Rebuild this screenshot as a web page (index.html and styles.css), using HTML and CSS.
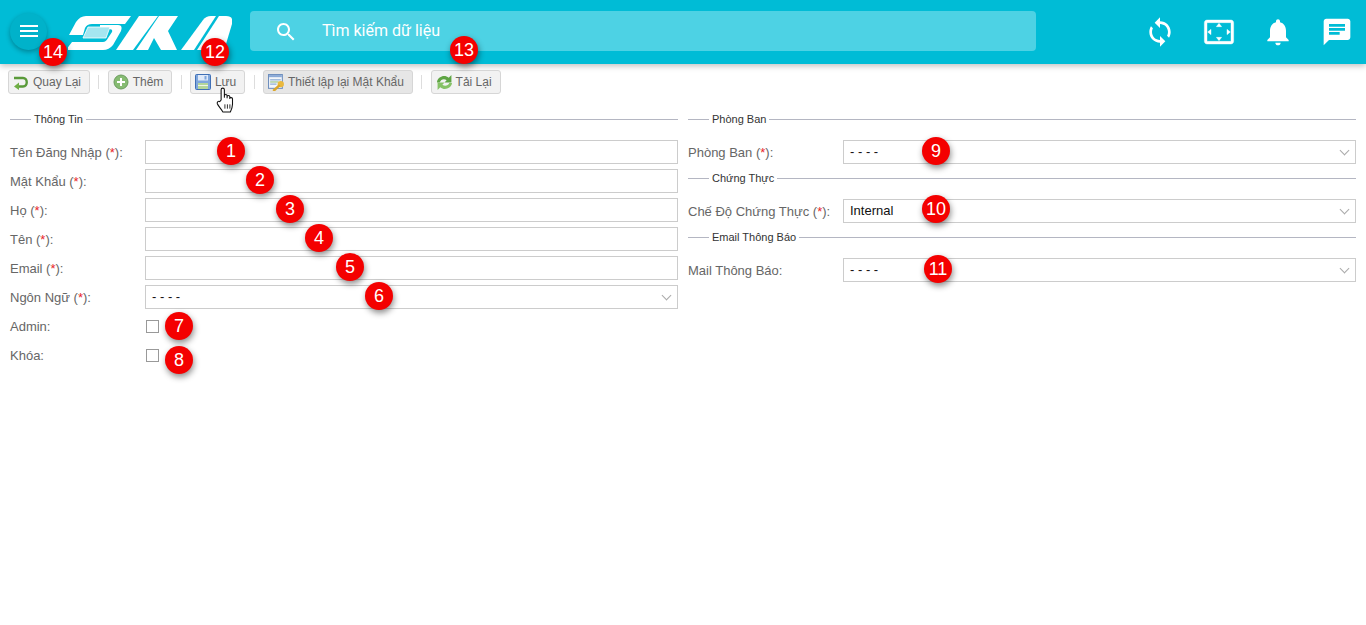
FILE: index.html
```html
<!DOCTYPE html>
<html lang="vi">
<head>
<meta charset="UTF-8" />
<meta name="viewport" content="width=device-width, initial-scale=1.0">
<title>Thêm người dùng</title>
<link rel="stylesheet" href="styles.css">
</head>
<body>

<header class="topbar">
  <button class="menu-btn" aria-label="Menu">
    <svg viewBox="0 0 24 24" width="24" height="24"><path fill="#fff" d="M3 18h18v-2H3v2zm0-5h18v-2H3v2zm0-7v2h18V6H3z"/></svg>
  </button>
  <svg class="logo" viewBox="68 15 164 35" width="164" height="35" aria-label="Logo">
    <g fill="#fff">
      <path d="M86 16H131L125 24H92Q87 24 85 28L83 35H69L76 22Q80 16 86 16Z"/>
      <path d="M109 25H118Q123 25 121 31L113 45Q109 50 103 50H66L72 42H103Q106 42 108 38L112 32Q113 29 109 29H100V25Z"/>
      <path d="M116 50L139 16H158L133 50Z"/>
      <path d="M136 50L159 16H178L168 31L177 50H161L154 38L148 50Z"/>
      <path d="M181 50L203 20Q206 16 211 16H216L194 50Z"/>
      <path d="M219 16H226Q234 16 232 24L226 44Q224 50 217 50H197Z"/>
    </g>
    <path fill="#a5e6f0" stroke="#fff" stroke-width="0.800" d="M88 27H110L106 38H83Z"/>
  </svg>
  <div class="search">
    <svg viewBox="0 0 24 24" width="24" height="24"><path fill="#fff" d="M15.5 14h-.79l-.28-.27C15.41 12.59 16 11.11 16 9.5 16 5.91 13.09 3 9.5 3S3 5.91 3 9.5 5.91 16 9.5 16c1.61 0 3.09-.59 4.23-1.57l.27.28v.79l5 4.99L20.49 19l-4.99-5zm-6 0C7.01 14 5 11.99 5 9.5S7.01 5 9.5 5 14 7.01 14 9.5 11.99 14 9.5 14z"/></svg>
    <span>Tìm kiếm dữ liệu</span>
  </div>
  <div class="top-icons">
    <svg viewBox="0 0 24 24" width="32" height="32"><path fill="#fff" d="M12 4V1L8 5l4 4V6c3.31 0 6 2.69 6 6 0 1.01-.25 1.97-.7 2.8l1.46 1.46C19.54 15.03 20 13.57 20 12c0-4.42-3.58-8-8-8zm0 14c-3.31 0-6-2.69-6-6 0-1.01.25-1.97.7-2.8L5.24 7.74C4.46 8.97 4 10.43 4 12c0 4.42 3.58 8 8 8v3l4-4-4-4v3z"/></svg>
    <svg viewBox="0 0 24 24" width="32" height="32"><path fill="#fff" stroke="#fff" stroke-width="0.300" d="M12.01 5.5L10 8h4l-1.99-2.5zM18 10v4l2.5-1.99L18 10zM6 10l-2.5 2.01L6 14v-4zm8 6h-4l2.01 2.5L14 16zm7-13H3c-1.1 0-2 .9-2 2v14c0 1.1.9 2 2 2h18c1.1 0 2-.9 2-2V5c0-1.1-.9-2-2-2zm0 16.01H3V4.99h18v14.02z"/></svg>
    <svg viewBox="0 0 24 24" width="32" height="32"><path fill="#fff" d="M12 22c1.1 0 2-.9 2-2h-4c0 1.1.89 2 2 2zm6-6v-5c0-3.07-1.64-5.64-4.5-6.32V4c0-.83-.67-1.5-1.5-1.5s-1.5.67-1.5 1.5v.68C7.63 5.36 6 7.92 6 11v5l-2 2v1h16v-1l-2-2z"/></svg>
    <svg viewBox="0 0 24 24" width="32" height="32"><path fill="#fff" d="M20 2H4c-1.1 0-1.99.9-1.99 2L2 22l4-4h14c1.1 0 2-.9 2-2V4c0-1.1-.9-2-2-2zM6 9h12v2H6V9zm8 5H6v-2h8v2zm4-6H6V6h12v2z"/></svg>
  </div>
</header>

<nav class="toolbar">
  <a class="tool-btn">
    <svg viewBox="0 0 16 16" width="16" height="16"><path fill="none" stroke="#5a9a3a" stroke-width="2.400" d="M1 4H10C15 4 15 12.500 10 12.500H5"/><path fill="#6fae45" d="M6 8.500L1 12.500L6 16Z"/></svg>
    Quay Lại
  </a>
  <span class="sep"></span>
  <a class="tool-btn">
    <svg viewBox="0 0 16 16" width="16" height="16"><circle cx="8" cy="8" r="7" fill="#86bb72" stroke="#6b9c5e"/><path fill="#fff" d="M7 4h2v3h3v2H9v3H7V9H4V7h3z"/></svg>
    Thêm
  </a>
  <span class="sep"></span>
  <a class="tool-btn">
    <svg viewBox="0 0 16 16" width="16" height="16"><rect x="0.500" y="0.500" width="15" height="15" rx="1" fill="#7ea6dc" stroke="#3f6fb5"/><rect x="3" y="1" width="10" height="5.500" fill="#dfe9f8"/><rect x="9.500" y="2" width="2" height="3.500" fill="#7ea6dc"/><rect x="3" y="9" width="10" height="6" fill="#b4d69a"/><rect x="3" y="11" width="10" height="1" fill="#eef5e6"/></svg>
    Lưu
  </a>
  <span class="sep"></span>
  <a class="tool-btn tool-btn-active">
    <svg class="icon-wide" viewBox="0 0 16 16" width="17" height="17"><rect x="0.500" y="0.500" width="13" height="13" fill="#f3f6fb" stroke="#6f8fbe"/><rect x="1" y="1" width="12" height="2" fill="#8aa9d6"/><rect x="2" y="5" width="10" height="1" fill="#7fa2d0"/><rect x="2" y="7" width="8" height="1" fill="#8fbf7f"/><rect x="2" y="9" width="6" height="1" fill="#7fa2d0"/><circle cx="12" cy="9.500" r="3" fill="#eab93f"/><path stroke="#dba62c" stroke-width="2.400" d="M11 10.500L5 16"/></svg>
    Thiết lập lại Mật Khẩu
  </a>
  <span class="sep"></span>
  <a class="tool-btn">
    <svg class="icon-wide" viewBox="0 0 16 16" width="17" height="17"><path fill="#5fa544" d="M1 7C2 2.500 8 0 12 3.500L14.500 1V8H8L10 5.800C7.500 4 4.500 5 3.500 8H1Z"/><path fill="#86c266" d="M15 9C14 13.500 8 16 4 12.500L1.500 15V8H8L6 10.200C8.500 12 11.500 11 12.500 8.500H15Z"/></svg>
    Tải Lại
  </a>
</nav>

<main class="form">
  <section class="col">
    <div class="legend"><span>Thông Tin</span></div>
    <div class="rows">
      <div class="row"><label>Tên Đăng Nhập (<b>*</b>):</label><div class="field"></div></div>
      <div class="row"><label>Mật Khẩu (<b>*</b>):</label><div class="field"></div></div>
      <div class="row"><label>Họ (<b>*</b>):</label><div class="field"></div></div>
      <div class="row"><label>Tên (<b>*</b>):</label><div class="field"></div></div>
      <div class="row"><label>Email (<b>*</b>):</label><div class="field"></div></div>
      <div class="row"><label>Ngôn Ngữ (<b>*</b>):</label><div class="field select">- - - -</div></div>
      <div class="row"><label>Admin:</label><span class="check"></span></div>
      <div class="row"><label>Khóa:</label><span class="check"></span></div>
    </div>
  </section>

  <section class="col">
    <div class="legend"><span>Phòng Ban</span></div>
    <div class="row row-single"><label>Phòng Ban (<b>*</b>):</label><div class="field select">- - - -</div></div>
    <div class="legend legend-tight"><span>Chứng Thực</span></div>
    <div class="row row-single"><label>Chế Độ Chứng Thực (<b>*</b>):</label><div class="field select">Internal</div></div>
    <div class="legend legend-tight"><span>Email Thông Báo</span></div>
    <div class="row row-single"><label>Mail Thông Báo:</label><div class="field select">- - - -</div></div>
  </section>
</main>

<span class="badge b1">1</span>
<span class="badge b2">2</span>
<span class="badge b3">3</span>
<span class="badge b4">4</span>
<span class="badge b5">5</span>
<span class="badge b6">6</span>
<span class="badge b7">7</span>
<span class="badge b8">8</span>
<span class="badge b9">9</span>
<span class="badge b10">10</span>
<span class="badge b11">11</span>
<span class="badge b12">12</span>
<span class="badge b13">13</span>
<span class="badge b14">14</span>

<svg class="hand" viewBox="0 0 18 24" width="20" height="26">
  <path fill="#fff" stroke="#111" stroke-width="1" stroke-linejoin="round" d="M4.500 12V2.500C4.500 0.500 7.500 0.500 7.500 2.500V9.500V8C7.500 6.500 10 6.500 10 8V10V8.800C10 7.500 12.500 7.500 12.500 8.800V10.500C12.500 9.500 15 9.500 15 10.800V16C15 19 14 21 13 23H6C5 20.500 2 18 1 15.500C0.500 14 2 12.500 3.200 13.500Z"/>
  <path stroke="#111" stroke-width="0.800" d="M8 16v4M10.300 16v4M12.600 16v4"/>
</svg>

</body>
</html>
```

FILE: styles.css
```css
* {
  box-sizing: border-box;
}
html, body {
  height: 100%;
}
body {
  margin: 0;
  background: #fff;
  font-family: "Liberation Sans", Arial, sans-serif;
  font-size: 13px;
  color: #666;
  overflow: hidden;
}

.topbar {
  height: 64px;
  background: #00bcd6;
  display: flex;
  align-items: center;
  padding: 0 13px 0 10px;
  box-shadow: 0 2px 6px rgba(0, 0, 0, 0.25);
}
.menu-btn {
  width: 37px;
  height: 37px;
  margin-top: -2px;
  padding: 0;
  border: none;
  border-radius: 50%;
  background: #00b2ca;
  display: flex;
  align-items: center;
  justify-content: center;
  box-shadow: 0 2px 5px rgba(0, 0, 0, 0.3);
}
.logo {
  margin-left: 21px;
  margin-top: 1px;
  flex: none;
}
.search {
  width: 786px;
  height: 40px;
  margin-left: 18px;
  margin-top: -2px;
  padding-left: 24px;
  border-radius: 4px;
  background: #4dd2e4;
  display: flex;
  align-items: center;
  gap: 24px;
  color: #fff;
  font-family: Roboto, sans-serif;
  font-size: 16px;
}
.search svg {
  margin-top: 2px;
}
.search span {
  margin-top: -2px;
}
.top-icons {
  margin-left: auto;
  display: flex;
  gap: 27px;
}

.toolbar {
  height: 24px;
  margin: 6px 0 0 8px;
  display: flex;
  align-items: center;
}
.tool-btn {
  height: 24px;
  padding: 0 8px 0 4px;
  border: 1px solid #d6d6d6;
  border-radius: 3px;
  background: #f2f2f2;
  display: flex;
  align-items: center;
  gap: 4px;
  font-size: 12px;
  color: #666;
}
.tool-btn-active {
  background: #e6e6e6;
}
.icon-wide {
  margin-right: -1px;
}
.sep {
  width: 1px;
  height: 14px;
  margin: 0 8.300px;
  background: #ddd;
}

.form {
  margin-top: 18px;
  padding: 0 10px;
  display: flex;
  gap: 10px;
}
.col {
  flex: 1;
  min-width: 0;
}
.legend {
  height: 14px;
  display: flex;
  align-items: center;
  gap: 3px;
  font-size: 11px;
  color: #333;
}
.legend::before {
  content: "";
  width: 21px;
  height: 1px;
  background: #b4b6c2;
}
.legend::after {
  content: "";
  flex: 1;
  height: 1px;
  background: #b4b6c2;
}
.legend-tight {
  margin-top: 7px;
}
.rows {
  margin-top: 14px;
  display: flex;
  flex-direction: column;
  gap: 5px;
}
.row {
  height: 24px;
  display: flex;
  align-items: center;
}
.row-single {
  margin-top: 14px;
}
.row label {
  width: 135px;
  flex: none;
  white-space: nowrap;
}
.col + .col .row label {
  width: 155px;
}
.row b {
  font-weight: normal;
  color: #e8262a;
}
.field {
  flex: 1;
  height: 24px;
  border: 1px solid #ccc;
  background: #fff;
  padding-left: 6px;
  line-height: 22px;
  color: #111;
  position: relative;
}
.select::after {
  content: "";
  position: absolute;
  top: 6px;
  right: 7px;
  width: 6px;
  height: 6px;
  border-right: 1px solid #aaa;
  border-bottom: 1px solid #aaa;
  transform: rotate(45deg);
}
.check {
  width: 13px;
  height: 13px;
  margin-left: 1px;
  border: 1px solid #999;
  background: #fff;
}

.badge {
  position: absolute;
  width: 28px;
  height: 28px;
  margin: -14px 0 0 -14px;
  border-radius: 50%;
  background: #f40000;
  color: #fff;
  font-size: 18px;
  line-height: 28px;
  text-align: center;
  box-shadow: 1px 3px 6px rgba(0, 0, 0, 0.45);
}
.b1 { left: 231px; top: 151px; }
.b2 { left: 260px; top: 180px; }
.b3 { left: 290px; top: 209px; }
.b4 { left: 319px; top: 238px; }
.b5 { left: 350px; top: 267px; }
.b6 { left: 379px; top: 296px; }
.b7 { left: 179px; top: 326px; }
.b8 { left: 179px; top: 360px; }
.b9 { left: 936px; top: 151px; }
.b10 { left: 936px; top: 209px; }
.b11 { left: 938px; top: 269px; }
.b12 { left: 215px; top: 52px; }
.b13 { left: 464px; top: 50px; }
.b14 { left: 53px; top: 52px; }

.hand {
  position: absolute;
  left: 216px;
  top: 87px;
}
```
